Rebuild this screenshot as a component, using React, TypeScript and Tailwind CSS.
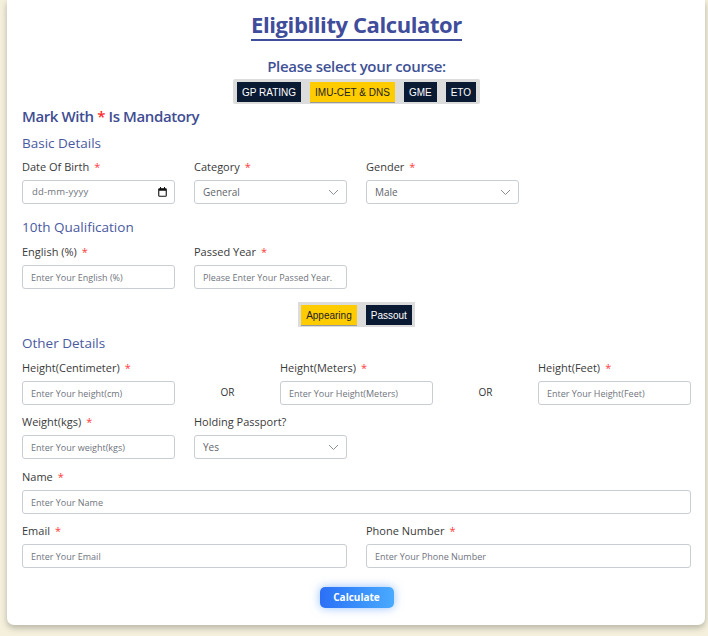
import React from "react";

const Star = () => <span className="text-[#ff3b3b] ml-[5px]">*</span>;

const Label = ({ children, req = true }: { children: React.ReactNode; req?: boolean }) => (
  <div className="text-[11px] leading-[16px] text-[#3a3a3a] whitespace-nowrap">
    {children}
    {req && <Star />}
  </div>
);

const Input = ({ ph }: { ph: string }) => (
  <input
    readOnly
    placeholder={ph}
    className="block w-full h-[24px] border border-[#c9cdd4] rounded-[3px] px-[8px] text-[9px] bg-white placeholder:text-[#6f747c] outline-none"
    style={{ fontFamily: "'Open Sans', sans-serif" }}
  />
);

const Chevron = () => (
  <svg width="11" height="7" viewBox="0 0 11 7" fill="none">
    <path d="M1 1l4.5 4.5L10 1" stroke="#8a8f96" strokeWidth="1" />
  </svg>
);

const SelectBox = ({ value }: { value: string }) => (
  <div className="h-[24px] border border-[#c9cdd4] rounded-[3px] pl-[8px] pr-[7px] flex items-center justify-between bg-white">
    <span className="text-[10px] text-[#5f646b]">{value}</span>
    <Chevron />
  </div>
);

const DateBox = () => (
  <div className="h-[24px] border border-[#c9cdd4] rounded-[3px] pl-[9px] pr-[7px] flex items-center justify-between bg-white">
    <span className="text-[9.5px] text-[#6f747c] tracking-[0.2px]">dd-mm-yyyy</span>
    <svg width="9" height="10" viewBox="0 0 9 10" fill="none">
      <rect x="0.75" y="1.75" width="7.5" height="7.5" rx="0.8" stroke="#111" strokeWidth="1.1" />
      <rect x="0.75" y="1.75" width="7.5" height="2" fill="#111" />
      <rect x="2" y="0" width="1" height="2" fill="#111" />
      <rect x="6" y="0" width="1" height="2" fill="#111" />
    </svg>
  </div>
);

const Dark = ({ children }: { children: React.ReactNode }) => (
  <div className="h-[20px] px-[5px] bg-[#0b1a33] text-white text-[10px] flex items-center">{children}</div>
);
const Yellow = ({ children }: { children: React.ReactNode }) => (
  <div className="h-[20px] px-[5px] bg-[#ffcc00] text-[#222] text-[10px] flex items-center shadow-[0_1px_0_#999]">{children}</div>
);

export default function App() {
  return (
    <div className="min-h-[636px] w-[708px] bg-[#f4f0dc]" style={{ fontFamily: "'Open Sans', sans-serif" }}>
      <div className="ml-[7px] w-[698px] bg-white rounded-b-[7px] shadow-[0_3px_6px_rgba(0,0,0,0.25)] pl-[15px] pr-[14px] pb-[17px]">
        <div className="flex flex-col items-center pt-[10px]">
          <div className="text-[22px] leading-[28px] font-bold text-[#3f4d9a] border-b-2 border-[#3f4d9a] pb-[1px] tracking-[-0.4px]">
            Eligibility Calculator
          </div>
          <div className="mt-[15px] text-[15px] leading-[20px] font-semibold tracking-[-0.3px] text-[#3f5296]">
            Please select your course:
          </div>
          <div
            className="mt-[3px] bg-[#dcdcdc] pt-[3px] pb-[2px] px-[4px] flex gap-[9px] rounded-[2px]"
            style={{ fontFamily: "'Liberation Sans', Arial, sans-serif" }}
          >
            <Dark>GP RATING</Dark>
            <Yellow>IMU-CET &amp; DNS</Yellow>
            <Dark>GME</Dark>
            <Dark>ETO</Dark>
          </div>
        </div>

        <div className="mt-[2px] text-[15px] leading-[20px] font-semibold tracking-[-0.4px] text-[#3f4d92]">
          Mark With <span className="text-[#ff2a2a]">*</span> Is Mandatory
        </div>
        <div className="mt-[7px] text-[13.5px] leading-[20px] text-[#4a5aa0]">Basic Details</div>

        <div className="mt-[6px] grid grid-cols-4 gap-x-[19px]">
          <div>
            <Label>Date Of Birth</Label>
            <div className="mt-[5px]"><DateBox /></div>
          </div>
          <div>
            <Label>Category</Label>
            <div className="mt-[5px]"><SelectBox value="General" /></div>
          </div>
          <div>
            <Label>Gender</Label>
            <div className="mt-[5px]"><SelectBox value="Male" /></div>
          </div>
        </div>

        <div className="mt-[13px] text-[13.5px] leading-[20px] text-[#4a5aa0]">10th Qualification</div>
        <div className="mt-[7px] grid grid-cols-4 gap-x-[19px]">
          <div>
            <Label>English (%)</Label>
            <div className="mt-[5px]"><Input ph="Enter Your English (%)" /></div>
          </div>
          <div>
            <Label>Passed Year</Label>
            <div className="mt-[5px]"><Input ph="Please Enter Your Passed Year." /></div>
          </div>
        </div>

        <div className="mt-[13px] flex justify-center">
          <div className="bg-[#dcdcdc] pt-[3px] pb-[2px] px-[3px] flex gap-[9px]" style={{ fontFamily: "'Liberation Sans', Arial, sans-serif" }}>
            <Yellow>Appearing</Yellow>
            <Dark>Passout</Dark>
          </div>
        </div>

        <div className="mt-[6px] text-[13.5px] leading-[20px] text-[#4a5aa0]">Other Details</div>
        <div className="mt-[7px] flex items-end justify-between">
          <div className="w-[153px]">
            <Label>Height(Centimeter)</Label>
            <div className="mt-[5px]"><Input ph="Enter Your height(cm)" /></div>
          </div>
          <div className="h-[24px] flex items-center text-[10px] text-[#333] -translate-y-[1px]">OR</div>
          <div className="w-[153px]">
            <Label>Height(Meters)</Label>
            <div className="mt-[5px]"><Input ph="Enter Your Height(Meters)" /></div>
          </div>
          <div className="h-[24px] flex items-center text-[10px] text-[#333] -translate-y-[1px]">OR</div>
          <div className="w-[153px]">
            <Label>Height(Feet)</Label>
            <div className="mt-[5px]"><Input ph="Enter Your Height(Feet)" /></div>
          </div>
        </div>

        <div className="mt-[9px] grid grid-cols-4 gap-x-[19px]">
          <div>
            <Label>Weight(kgs)</Label>
            <div className="mt-[5px]"><Input ph="Enter Your weight(kgs)" /></div>
          </div>
          <div>
            <Label req={false}>Holding Passport?</Label>
            <div className="mt-[5px]"><SelectBox value="Yes" /></div>
          </div>
        </div>

        <div className="mt-[10px]">
          <Label>Name</Label>
          <div className="mt-[5px]"><Input ph="Enter Your Name" /></div>
        </div>

        <div className="mt-[9px] grid grid-cols-2 gap-x-[19px]">
          <div>
            <Label>Email</Label>
            <div className="mt-[5px]"><Input ph="Enter Your Email" /></div>
          </div>
          <div>
            <Label>Phone Number</Label>
            <div className="mt-[5px]"><Input ph="Enter Your Phone Number" /></div>
          </div>
        </div>

        <div className="mt-[19px] flex justify-center">
          <div className="w-[74px] h-[21px] rounded-[5px] bg-gradient-to-r from-[#2c6ff6] to-[#4aaaff] text-white text-[10px] font-bold flex items-center justify-center shadow-[0_0_10px_rgba(60,140,255,0.55)]">
            Calculate
          </div>
        </div>
      </div>
    </div>
  );
}
